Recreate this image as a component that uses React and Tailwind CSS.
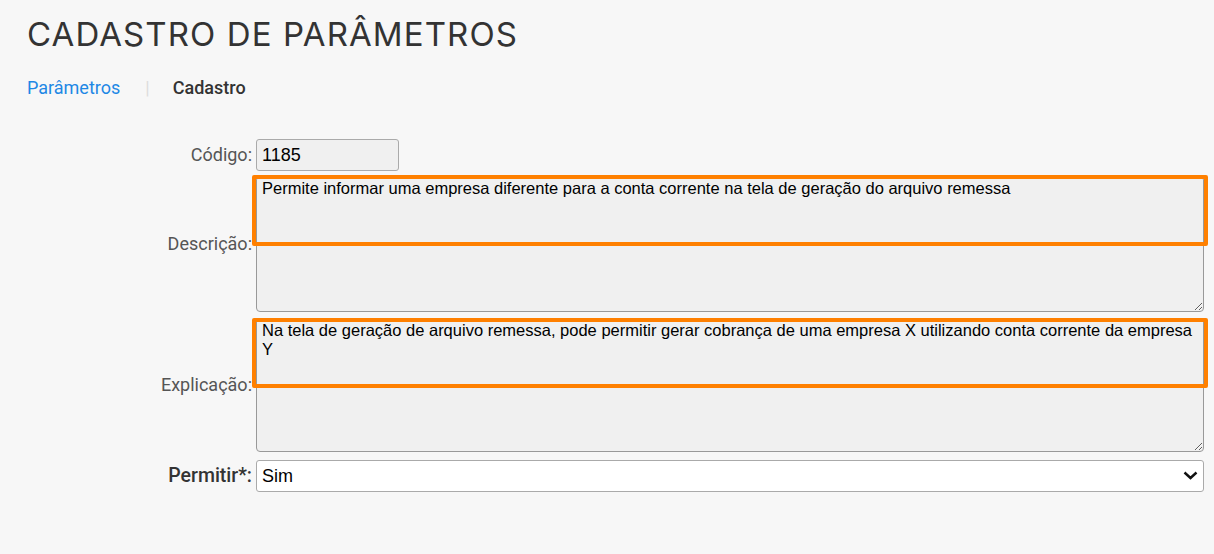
import React from 'react';

const labelCls = "text-right text-[18px] text-[#555] font-['Roboto',sans-serif] leading-none";

const App = () => {
  return (
    <div className="min-h-screen bg-[#f7f7f7] pt-[14px] pl-[27px]">
      <h1 className="text-[33px] leading-[40px] tracking-[1.1px] text-[#333] font-['Inter',sans-serif] font-normal">
        CADASTRO DE PARÂMETROS
      </h1>

      {/* breadcrumb */}
      <div className="mt-[23px] flex items-center font-['Roboto',sans-serif] text-[18px] leading-[22px]">
        <a className="text-[#1e88e5]">Parâmetros</a>
        <span className="ml-[25px] mr-[23px] text-[#ddd]">|</span>
        <span className="text-[#333] font-medium">Cadastro</span>
      </div>

      {/* form */}
      <div className="mt-[40px] grid w-[1177px] grid-cols-[225px_948px] gap-x-[4px] items-center font-['Liberation_Sans',Arial,sans-serif]">
        <label className={labelCls}>Código:</label>
        <input
          readOnly
          value="1185"
          className="h-[32px] w-[143px] rounded-[3px] border border-[#aaa] bg-[#f0f0f0] px-[5px] text-[18px] text-black outline-none"
        />

        <label className={labelCls + ' mt-[5px]'}>Descrição:</label>
        <div className="relative mt-[5px]">
          <textarea
            readOnly
            value="Permite informar uma empresa diferente para a conta corrente na tela de geração do arquivo remessa"
            className="block h-[136px] w-full rounded-[4px] border border-[#999] bg-[#f0f0f0] px-[5px] py-[2px] text-[16.5px] leading-[19px] text-black outline-none"
          />
          <div className="pointer-events-none absolute left-[-4px] right-[-4px] top-[-1px] h-[71px] rounded-[2px] border-[4px] border-[#ff8000]" />
        </div>

        <label className={labelCls + ' mt-[6px]'}>Explicação:</label>
        <div className="relative mt-[6px]">
          <textarea
            readOnly
            value="Na tela de geração de arquivo remessa, pode permitir gerar cobrança de uma empresa X utilizando conta corrente da empresa Y"
            className="block h-[134px] w-full rounded-[4px] border border-[#999] bg-[#f0f0f0] px-[5px] py-[2px] text-[16.5px] leading-[19px] text-black outline-none"
          />
          <div className="pointer-events-none absolute left-[-4px] right-[-4px] top-0 h-[70px] rounded-[2px] border-[4px] border-[#ff8000]" />
        </div>

        <label className="mt-[8px] text-right text-[19.5px] leading-none text-[#333] font-medium font-['Roboto',sans-serif]">Permitir*:</label>
        <div className="relative mt-[8px]">
          <select className="block h-[32px] w-full appearance-none rounded-[3px] border border-[#aaa] bg-white px-[5px] text-[18px] text-black outline-none">
            <option>Sim</option>
            <option>Não</option>
          </select>
          <svg
            className="pointer-events-none absolute right-[6px] top-[11px]"
            width="15"
            height="9"
            viewBox="0 0 15 9"
            fill="none"
            stroke="#111"
            strokeWidth="2.4"
          >
            <path d="M1.5 1.5 L7.5 7 L13.5 1.5" />
          </svg>
        </div>
      </div>
    </div>
  );
};

export default App;
